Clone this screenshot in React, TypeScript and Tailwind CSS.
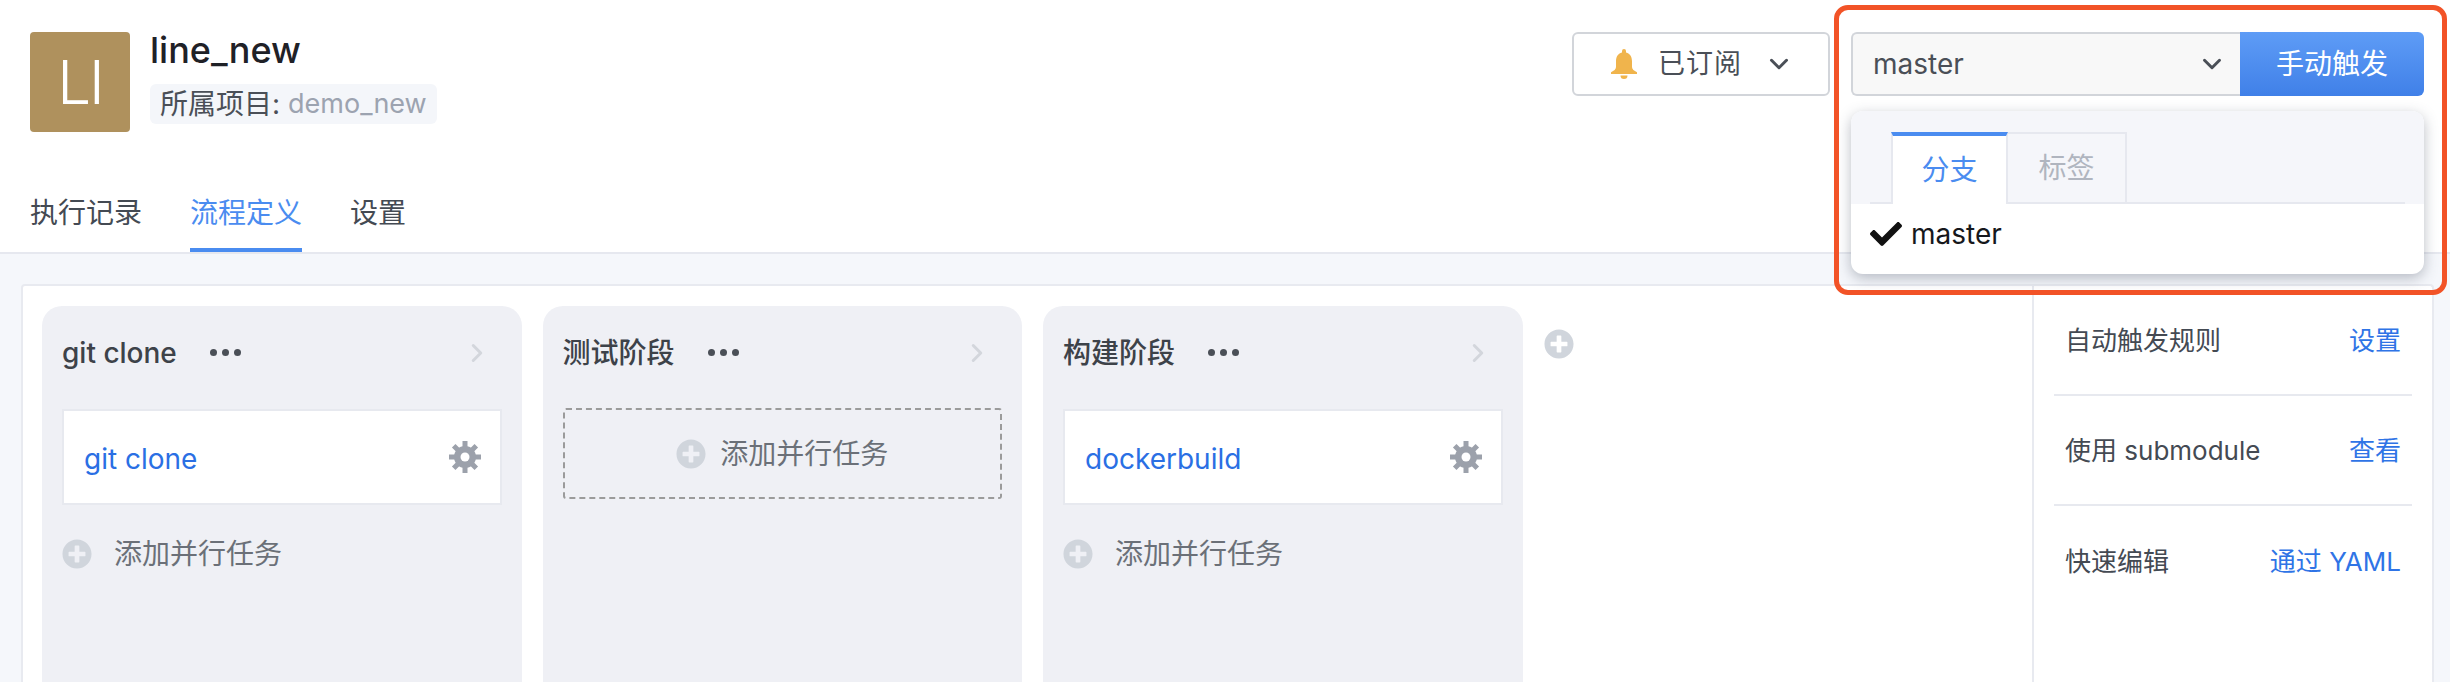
import React from 'react';
import { FaCheck, FaPlusCircle } from 'react-icons/fa';
import { ChevronDown, ChevronRight } from 'lucide-react';

const FONT = "font-['Inter','Noto_Sans_CJK_SC',sans-serif]";

const Gear = () => (
  <svg width="32" height="32" viewBox="0 0 32 32" className="text-[#9ca1ab]">
    <g stroke="currentColor" strokeWidth="5">
      <path d="M16 0V32M0 16H32M4.7 4.7L27.3 27.3M27.3 4.7L4.7 27.3" />
    </g>
    <circle cx="16" cy="16" r="11" fill="currentColor" />
    <circle cx="16" cy="16" r="4.5" fill="#fff" />
  </svg>
);

const Bell = () => (
  <svg width="26" height="30" viewBox="0 0 26 30" className="text-[#f0b44c]" fill="currentColor">
    <path d="M13 0a2 2 0 0 1 2 2v1.6c4.4 1 6 4.6 6 9v5.4c0 2.2 2 3.8 5 5.2V25H0v-1.8c3-1.4 5-3 5-5.2v-5.4c0-4.4 1.6-8 6-9V2a2 2 0 0 1 2-2z" />
    <path d="M9.5 26.5h7a3.5 3.5 0 0 1-7 0z" />
  </svg>
);

const AddTask = ({ gap }: { gap: string }) => (
  <div className={`flex items-center ${gap}`}>
    <FaPlusCircle className="text-[30px] text-[#d0d5dc]" />
    <span className="text-[28px] leading-[40px] text-[#6b7078]">添加并行任务</span>
  </div>
);

const Stage = ({ title, task }: { title: string; task?: string }) => (
  <div className="h-[376px] w-[479.5px] shrink-0 rounded-t-[20px] bg-[#eff0f5] pl-[20px] pr-[20px]">
    <div className="flex h-[94px] items-center pb-[1px]">
      <span className="text-[28px] font-medium text-[#3d4249]">{title}</span>
      <span className="ml-[33px] flex gap-[5px]">
        <i className="size-[7px] rounded-full bg-[#4a4f57]" />
        <i className="size-[7px] rounded-full bg-[#4a4f57]" />
        <i className="size-[7px] rounded-full bg-[#4a4f57]" />
      </span>
      <ChevronRight className="ml-auto mr-[10px] size-[30px] text-[#d3d6dc]" strokeWidth={2.4} />
    </div>
    {task ? (
      <>
        <div className="mt-[9px] flex h-[96px] items-center justify-between border-2 border-[#e7e9ef] bg-white pl-[20px] pr-[19px]">
          <span className="pt-[3px] text-[28px] text-[#2a6fe4]">{task}</span>
          <Gear />
        </div>
        <div className="mt-[29px]">
          <AddTask gap="gap-[22px]" />
        </div>
      </>
    ) : (
      <div className="mt-[8px] flex h-[91px] items-center justify-center rounded-[3px] border-2 border-dashed border-[#9b9b9b]">
        <AddTask gap="gap-[14px]" />
      </div>
    )}
  </div>
);

const SideRow = ({ label, action, divider }: { label: string; action: string; divider?: boolean }) => (
  <div className={`flex h-[110px] items-center justify-between px-[11px] text-[26px] ${divider ? 'border-b-2 border-[#e7e9ef]' : ''}`}>
    <span className="text-[#444a53]">{label}</span>
    <span className="text-[#2f74e6]">{action}</span>
  </div>
);

export default function App() {
  return (
    <div className={`relative h-[682px] w-[2450px] overflow-hidden bg-white ${FONT}`}>
      <header className="h-[254px] border-b-2 border-[#e6e8ef] px-[30px]">
        <div className="flex h-[178px] justify-between pt-[32px]">
          <div className="flex gap-[20px]">
            <div className="flex size-[100px] items-center justify-center rounded-[4px] bg-[#af915d] text-[60px] font-light leading-none tracking-[-2px] text-white">
              LI
            </div>
            <div>
              <div className="h-[50px] text-[36px] font-medium leading-[36px] text-[#1f2127]">line_new</div>
              <div className="mt-[2px] flex h-[40px] items-center rounded-[6px] bg-[#f4f6fa] px-[10px]">
                <span className="text-[28px] text-[#4a4f57]">所属项目:</span>
                <span className="ml-[8px] text-[27px] text-[#9ca3b0]">demo_new</span>
              </div>
            </div>
          </div>
          <div className="mr-[-4px] flex h-[64px] gap-[21px]">
            <button className="flex w-[258px] items-center rounded-[6px] border-2 border-[#d2d5da] bg-white pl-[37px] text-[27px] text-[#4a4f57]">
              <Bell />
              <span className="ml-[21px] tracking-[1px]">已订阅</span>
              <ChevronDown className="ml-[22px] size-[30px]" strokeWidth={2.4} />
            </button>
            <div className="flex">
              <div className="flex w-[389px] items-center justify-between rounded-l-[6px] border-2 border-r-0 border-[#d2d5da] bg-[#f8f8f8] pl-[20px] pr-[13px] text-[28px] text-[#4a4f57]">
                <span>master</span>
                <ChevronDown className="size-[30px]" strokeWidth={2.4} />
              </div>
              <button className="w-[184px] rounded-r-[6px] bg-gradient-to-b from-[#5e9cf6] to-[#4080e8] text-[28px] text-white">
                手动触发
              </button>
            </div>
          </div>
        </div>
        <nav className="flex h-[74px] gap-[48px] text-[28px] text-[#444a53]">
          <span className="pt-[14px]">执行记录</span>
          <span className="h-[74px] border-b-4 border-[#4a8cf0] pt-[14px] text-[#4a8cf0]">流程定义</span>
          <span className="pt-[14px]">设置</span>
        </nav>
      </header>

      <main className="h-[428px] bg-[#f5f7fb] pl-[21px] pr-[16px] pt-[30px]">
        <div className="flex h-[398px] rounded-t-[4px] border-x-2 border-t-2 border-[#e8eaf0] bg-white">
          <div className="flex flex-1 gap-[21px] pl-[19px] pt-[20px]">
            <Stage title="git clone" task="git clone" />
            <Stage title="测试阶段" />
            <Stage title="构建阶段" task="dockerbuild" />
            <FaPlusCircle className="mt-[23px] text-[30px] text-[#d0d5dc]" />
          </div>
          <aside className="w-[400px] shrink-0 border-l-2 border-[#e8eaf0] px-[20px]">
            <SideRow label="自动触发规则" action="设置" divider />
            <SideRow label="使用 submodule" action="查看" divider />
            <SideRow label="快速编辑" action="通过 YAML" />
          </aside>
        </div>
      </main>

      {/* branch dropdown, sits over the page */}
      <div className="absolute left-[1851px] top-[111px] h-[163px] w-[573px] overflow-hidden rounded-[12px] bg-white shadow-[0_4px_14px_rgba(60,70,90,0.35)]">
        <div className="h-[93px] bg-[#f5f6fa] px-[19px] pt-[21px]">
          <div className="flex h-[72px] border-b-2 border-[#e6e8ef] pl-[21px]">
            <div className="mb-[-2px] flex h-[72px] w-[117px] items-center justify-center border-x-2 border-t-4 border-x-[#e6e8ef] border-t-[#4a8cf0] bg-white text-[28px] text-[#4a8cf0]">
              分支
            </div>
            <div className="flex h-[70px] w-[119px] items-center justify-center border-r-2 border-t-2 border-[#e6e8ef] text-[28px] text-[#b0b5bf]">
              标签
            </div>
          </div>
        </div>
        <div className="flex h-[62px] items-center pb-[2px] pl-[19px] text-[28px] text-[#16181c]">
          <FaCheck className="text-[32px] text-[#111]" />
          <span className="ml-[9px]">master</span>
        </div>
      </div>

      {/* red annotation frame */}
      <div className="pointer-events-none absolute left-[1834px] top-[5px] h-[290px] w-[613px] rounded-[14px] border-[5px] border-[#f25327]" />
    </div>
  );
}
